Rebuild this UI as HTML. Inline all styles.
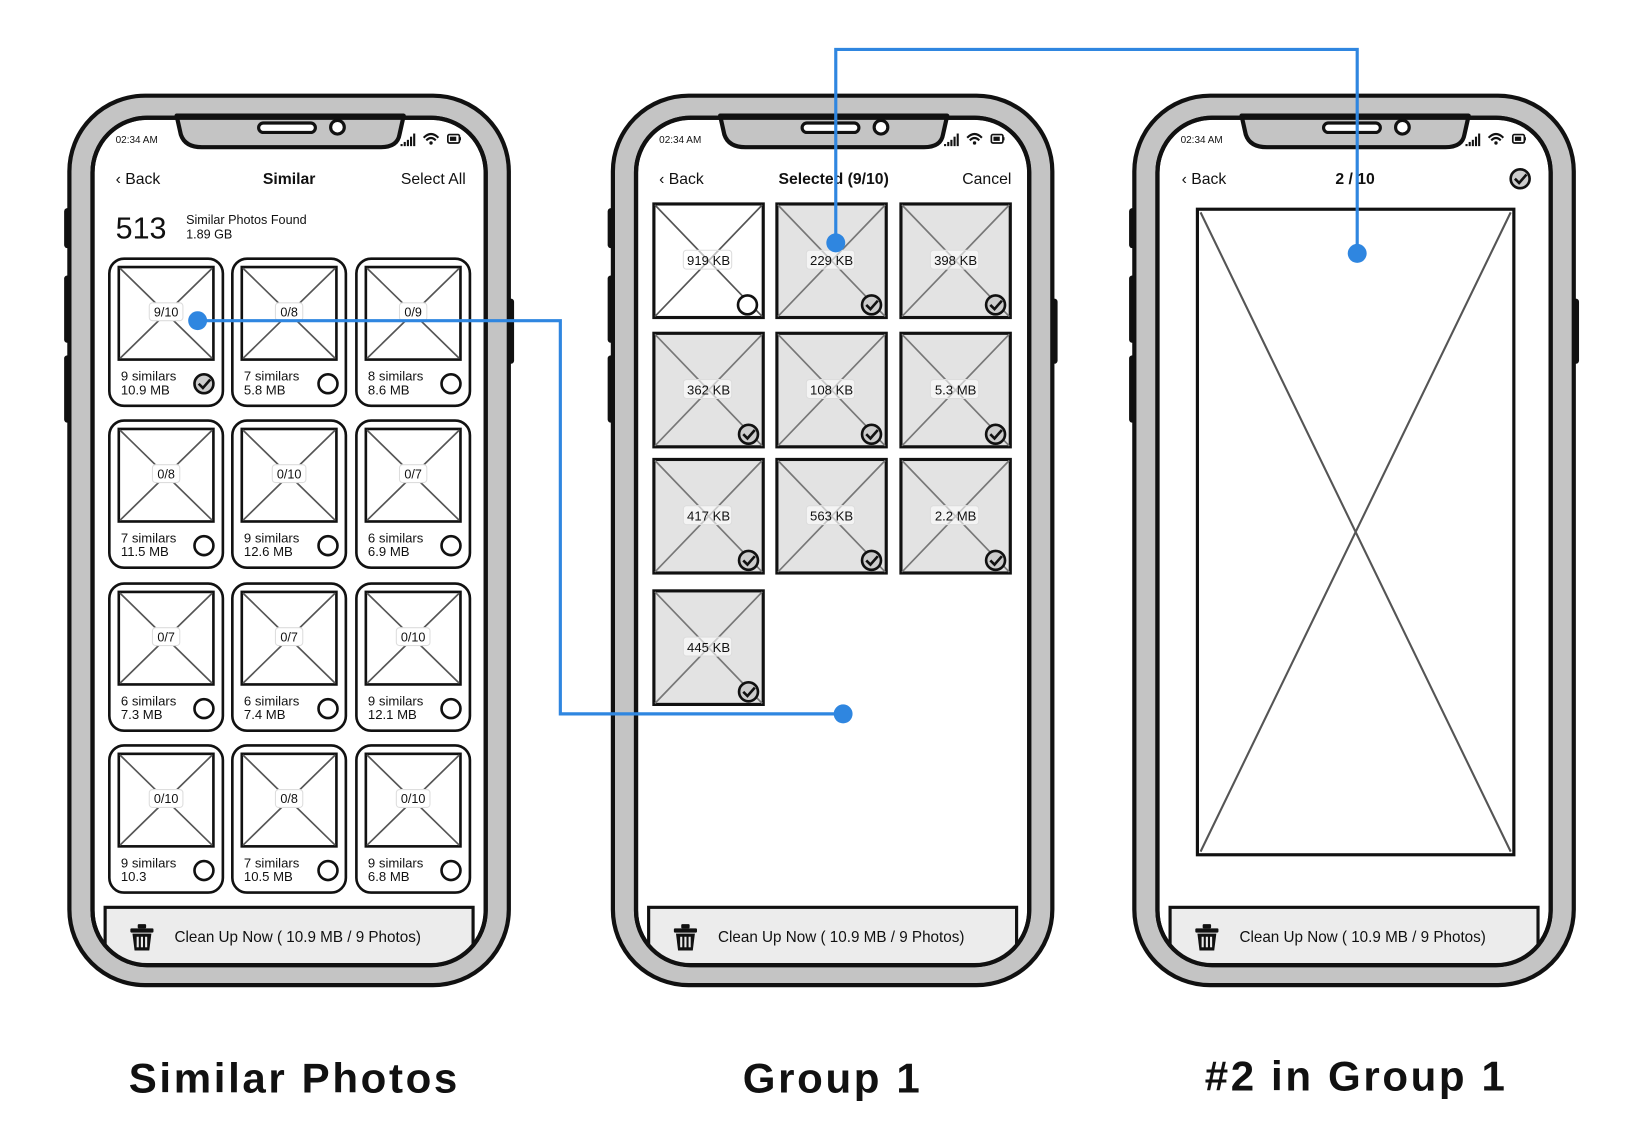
<!DOCTYPE html>
<html><head><meta charset="utf-8"><style>
html,body{margin:0;padding:0;background:#fff;}
svg{display:block;}
text{font-family:"Liberation Sans",sans-serif;fill:#111;}
</style></head><body>
<svg width="1640" height="1146" viewBox="0 0 1560 1090" preserveAspectRatio="none" xmlns="http://www.w3.org/2000/svg">
<defs>
<clipPath id="scr"><rect x="88" y="112" width="374" height="806" rx="52"/></clipPath>
<g id="frame">
  <rect x="61" y="198" width="8" height="38" rx="3" fill="#111"/>
  <rect x="61" y="262" width="8" height="64" rx="3" fill="#111"/>
  <rect x="61" y="338" width="8" height="64" rx="3" fill="#111"/>
  <rect x="481" y="284" width="8" height="62" rx="3" fill="#111"/>
  <rect x="66" y="91" width="418" height="846" rx="72" fill="#c4c4c4" stroke="#111" stroke-width="4"/>
  <rect x="88" y="112" width="374" height="806" rx="52" fill="#fff" stroke="#111" stroke-width="4"/>
  <path d="M168 110 L172 128 Q176 140 192 140 L362 140 Q378 140 380 128 L384 110 Z" fill="#c4c4c4" stroke="#111" stroke-width="4" stroke-linejoin="round"/>
  <rect x="246" y="117" width="54" height="9" rx="4.5" fill="#fff" stroke="#111" stroke-width="3"/>
  <circle cx="321" cy="121" r="6.5" fill="#fff" stroke="#111" stroke-width="3"/>
  <g fill="#111"><rect x="381" y="137" width="2" height="2"/><rect x="384" y="135" width="2" height="4"/><rect x="387" y="133" width="2" height="6"/><rect x="390" y="130" width="2" height="9"/><rect x="393" y="127" width="2" height="12"/></g>
  <path d="M403 131 Q410 124 417 131 M405.5 133.5 Q410 129 414.5 133.5" fill="none" stroke="#111" stroke-width="2"/>
  <circle cx="410" cy="136" r="1.6" fill="#111"/>
  <rect x="426" y="128" width="11" height="8" rx="1.5" fill="none" stroke="#111" stroke-width="1.6"/><rect x="428" y="130" width="6" height="4" fill="#111"/><rect x="437" y="130.5" width="1.5" height="3" fill="#111"/>
  <text x="110" y="136" font-size="9.5">02:34 AM</text>
</g>
<g id="bar">
  <g clip-path="url(#scr)"><rect x="100" y="863" width="350" height="70" fill="#ececec" stroke="#111" stroke-width="3"/></g>
  <rect x="88" y="112" width="374" height="806" rx="52" fill="none" stroke="#111" stroke-width="4"/>
  <g fill="#111"><rect x="124" y="883" width="22" height="4" rx="1"/><rect x="131" y="879" width="8" height="4" rx="1"/><path d="M126 888 L144 888 L142 904 L128 904 Z"/></g>
  <g fill="#ececec"><rect x="130" y="891" width="2" height="10"/><rect x="134" y="891" width="2" height="10"/><rect x="138" y="891" width="2" height="10"/></g>
  <text x="166" y="896" font-size="14.5">Clean Up Now ( 10.9 MB / 9 Photos)</text>
</g>
<g id="card">
  <rect x="0" y="0" width="108" height="140" rx="14" fill="#fff" stroke="#111" stroke-width="2.5"/>
  <rect x="9" y="8" width="90" height="88" fill="#fff" stroke="#111" stroke-width="2.5"/>
  <path d="M10 9 L98 95 M98 9 L10 95" stroke="#555" stroke-width="1.6"/>
</g>
<g id="tw">
  <rect x="0" y="0" width="104" height="108" fill="#fff" stroke="#111" stroke-width="3"/>
  <path d="M1 1 L103 107 M103 1 L1 107" stroke="#555" stroke-width="1.6"/>
</g>
<g id="tg">
  <rect x="0" y="0" width="104" height="108" fill="#e3e3e3" stroke="#111" stroke-width="3"/>
  <path d="M1 1 L103 107 M103 1 L1 107" stroke="#777" stroke-width="1.6"/>
  <circle cx="90" cy="96" r="9" fill="#ccc" stroke="#111" stroke-width="2.5"/>
  <path d="M85 96 L89 100 L96 92" fill="none" stroke="#111" stroke-width="2.5"/>
</g>
<g id="ck"><circle r="9" fill="#ccc" stroke="#111" stroke-width="2.5"/><path d="M-5 0 L-1 4 L6 -4" fill="none" stroke="#111" stroke-width="2.5"/></g>
<g id="oc"><circle r="9" fill="#fff" stroke="#111" stroke-width="2.5"/></g>
</defs>

<!-- PHONE 1 -->
<use href="#frame"/>
<text x="110" y="175" font-size="15">‹ Back</text>
<text x="275" y="175" font-size="15" font-weight="bold" text-anchor="middle">Similar</text>
<text x="443" y="175" font-size="15" text-anchor="end">Select All</text>
<text x="110" y="227" font-size="29">513</text>
<text x="177" y="213" font-size="12">Similar Photos Found</text>
<text x="177" y="227" font-size="12">1.89 GB</text>
<use href="#card" x="104" y="246"/><use href="#card" x="221" y="246"/><use href="#card" x="339" y="246"/>
<use href="#card" x="104" y="400"/><use href="#card" x="221" y="400"/><use href="#card" x="339" y="400"/>
<use href="#card" x="104" y="555"/><use href="#card" x="221" y="555"/><use href="#card" x="339" y="555"/>
<use href="#card" x="104" y="709"/><use href="#card" x="221" y="709"/><use href="#card" x="339" y="709"/>
<g fill="#fff" stroke="#ddd" stroke-width="1">
<rect x="142" y="288" width="32" height="17" rx="3"/><rect x="262" y="288" width="26" height="17" rx="3"/><rect x="380" y="288" width="26" height="17" rx="3"/>
<rect x="145" y="442" width="26" height="17" rx="3"/><rect x="259" y="442" width="32" height="17" rx="3"/><rect x="380" y="442" width="26" height="17" rx="3"/>
<rect x="145" y="597" width="26" height="17" rx="3"/><rect x="262" y="597" width="26" height="17" rx="3"/><rect x="377" y="597" width="32" height="17" rx="3"/>
<rect x="142" y="751" width="32" height="17" rx="3"/><rect x="262" y="751" width="26" height="17" rx="3"/><rect x="377" y="751" width="32" height="17" rx="3"/>
</g>
<g font-size="12" text-anchor="middle" style="fill:#333">
<text x="158" y="301">9/10</text><text x="275" y="301">0/8</text><text x="393" y="301">0/9</text>
<text x="158" y="455">0/8</text><text x="275" y="455">0/10</text><text x="393" y="455">0/7</text>
<text x="158" y="610">0/7</text><text x="275" y="610">0/7</text><text x="393" y="610">0/10</text>
<text x="158" y="764">0/10</text><text x="275" y="764">0/8</text><text x="393" y="764">0/10</text>
</g>
<g font-size="12.5">
<text x="115" y="362">9 similars</text><text x="115" y="375">10.9 MB</text>
<text x="232" y="362">7 similars</text><text x="232" y="375">5.8 MB</text>
<text x="350" y="362">8 similars</text><text x="350" y="375">8.6 MB</text>
<text x="115" y="516">7 similars</text><text x="115" y="529">11.5 MB</text>
<text x="232" y="516">9 similars</text><text x="232" y="529">12.6 MB</text>
<text x="350" y="516">6 similars</text><text x="350" y="529">6.9 MB</text>
<text x="115" y="671">6 similars</text><text x="115" y="684">7.3 MB</text>
<text x="232" y="671">6 similars</text><text x="232" y="684">7.4 MB</text>
<text x="350" y="671">9 similars</text><text x="350" y="684">12.1 MB</text>
<text x="115" y="825">9 similars</text><text x="115" y="838">10.3</text>
<text x="232" y="825">7 similars</text><text x="232" y="838">10.5 MB</text>
<text x="350" y="825">9 similars</text><text x="350" y="838">6.8 MB</text>
</g>
<use href="#ck" x="194" y="365"/><use href="#oc" x="312" y="365"/><use href="#oc" x="429" y="365"/>
<use href="#oc" x="194" y="519"/><use href="#oc" x="312" y="519"/><use href="#oc" x="429" y="519"/>
<use href="#oc" x="194" y="674"/><use href="#oc" x="312" y="674"/><use href="#oc" x="429" y="674"/>
<use href="#oc" x="194" y="828"/><use href="#oc" x="312" y="828"/><use href="#oc" x="429" y="828"/>
<use href="#bar"/>

<!-- PHONE 2 -->
<use href="#frame" x="517"/>
<text x="627" y="175" font-size="15">‹ Back</text>
<text x="793" y="175" font-size="15" font-weight="bold" text-anchor="middle">Selected (9/10)</text>
<text x="962" y="175" font-size="15" text-anchor="end">Cancel</text>
<use href="#tw" x="622" y="194"/>
<use href="#oc" x="711" y="290"/>
<use href="#tg" x="739" y="194"/><use href="#tg" x="857" y="194"/>
<use href="#tg" x="622" y="317"/><use href="#tg" x="739" y="317"/><use href="#tg" x="857" y="317"/>
<use href="#tg" x="622" y="437"/><use href="#tg" x="739" y="437"/><use href="#tg" x="857" y="437"/>
<use href="#tg" x="622" y="562"/>
<g fill="#fff" fill-opacity="0.6" stroke="#ddd" stroke-width="1">
<rect x="650" y="238" width="46" height="18" rx="3"/><rect x="767" y="238" width="46" height="18" rx="3"/><rect x="885" y="238" width="46" height="18" rx="3"/>
<rect x="650" y="361" width="46" height="18" rx="3"/><rect x="767" y="361" width="46" height="18" rx="3"/><rect x="885" y="361" width="46" height="18" rx="3"/>
<rect x="650" y="481" width="46" height="18" rx="3"/><rect x="767" y="481" width="46" height="18" rx="3"/><rect x="885" y="481" width="46" height="18" rx="3"/>
<rect x="650" y="606" width="46" height="18" rx="3"/>
</g>
<g font-size="12.5" text-anchor="middle" style="fill:#777">
<text x="674" y="252" style="fill:#111">919 KB</text><text x="791" y="252">229 KB</text><text x="909" y="252">398 KB</text>
<text x="674" y="375">362 KB</text><text x="791" y="375">108 KB</text><text x="909" y="375">5.3 MB</text>
<text x="674" y="495">417 KB</text><text x="791" y="495">563 KB</text><text x="909" y="495">2.2 MB</text>
<text x="674" y="620">445 KB</text>
</g>
<use href="#bar" x="517"/>

<!-- PHONE 3 -->
<use href="#frame" x="1013"/>
<text x="1124" y="175" font-size="15">‹ Back</text>
<text x="1289" y="175" font-size="15" font-weight="bold" text-anchor="middle">2 / 10</text>
<use href="#ck" x="1446" y="170"/>
<rect x="1139" y="199" width="301" height="614" fill="#fff" stroke="#111" stroke-width="3"/>
<path d="M1142 202 L1437 810 M1437 202 L1142 810" stroke="#555" stroke-width="2"/>
<use href="#bar" x="1013"/>

<!-- connectors -->
<g stroke="#2f86e0" stroke-width="3" fill="none">
<path d="M188 305 L533 305 L533 679 L802 679"/>
<path d="M795 231 L795 47 L1291 47 L1291 241"/>
</g>
<g fill="#2f86e0">
<circle cx="188" cy="305" r="9"/><circle cx="802" cy="679" r="9"/>
<circle cx="795" cy="231" r="9"/><circle cx="1291" cy="241" r="9"/>
</g>

<g font-size="40" font-weight="bold" text-anchor="middle" style="letter-spacing:2.5px">
<text x="280" y="1039">Similar Photos</text>
<text x="792" y="1039">Group 1</text>
<text x="1290" y="1037">#2 in Group 1</text>
</g>
</svg>
</body></html>
